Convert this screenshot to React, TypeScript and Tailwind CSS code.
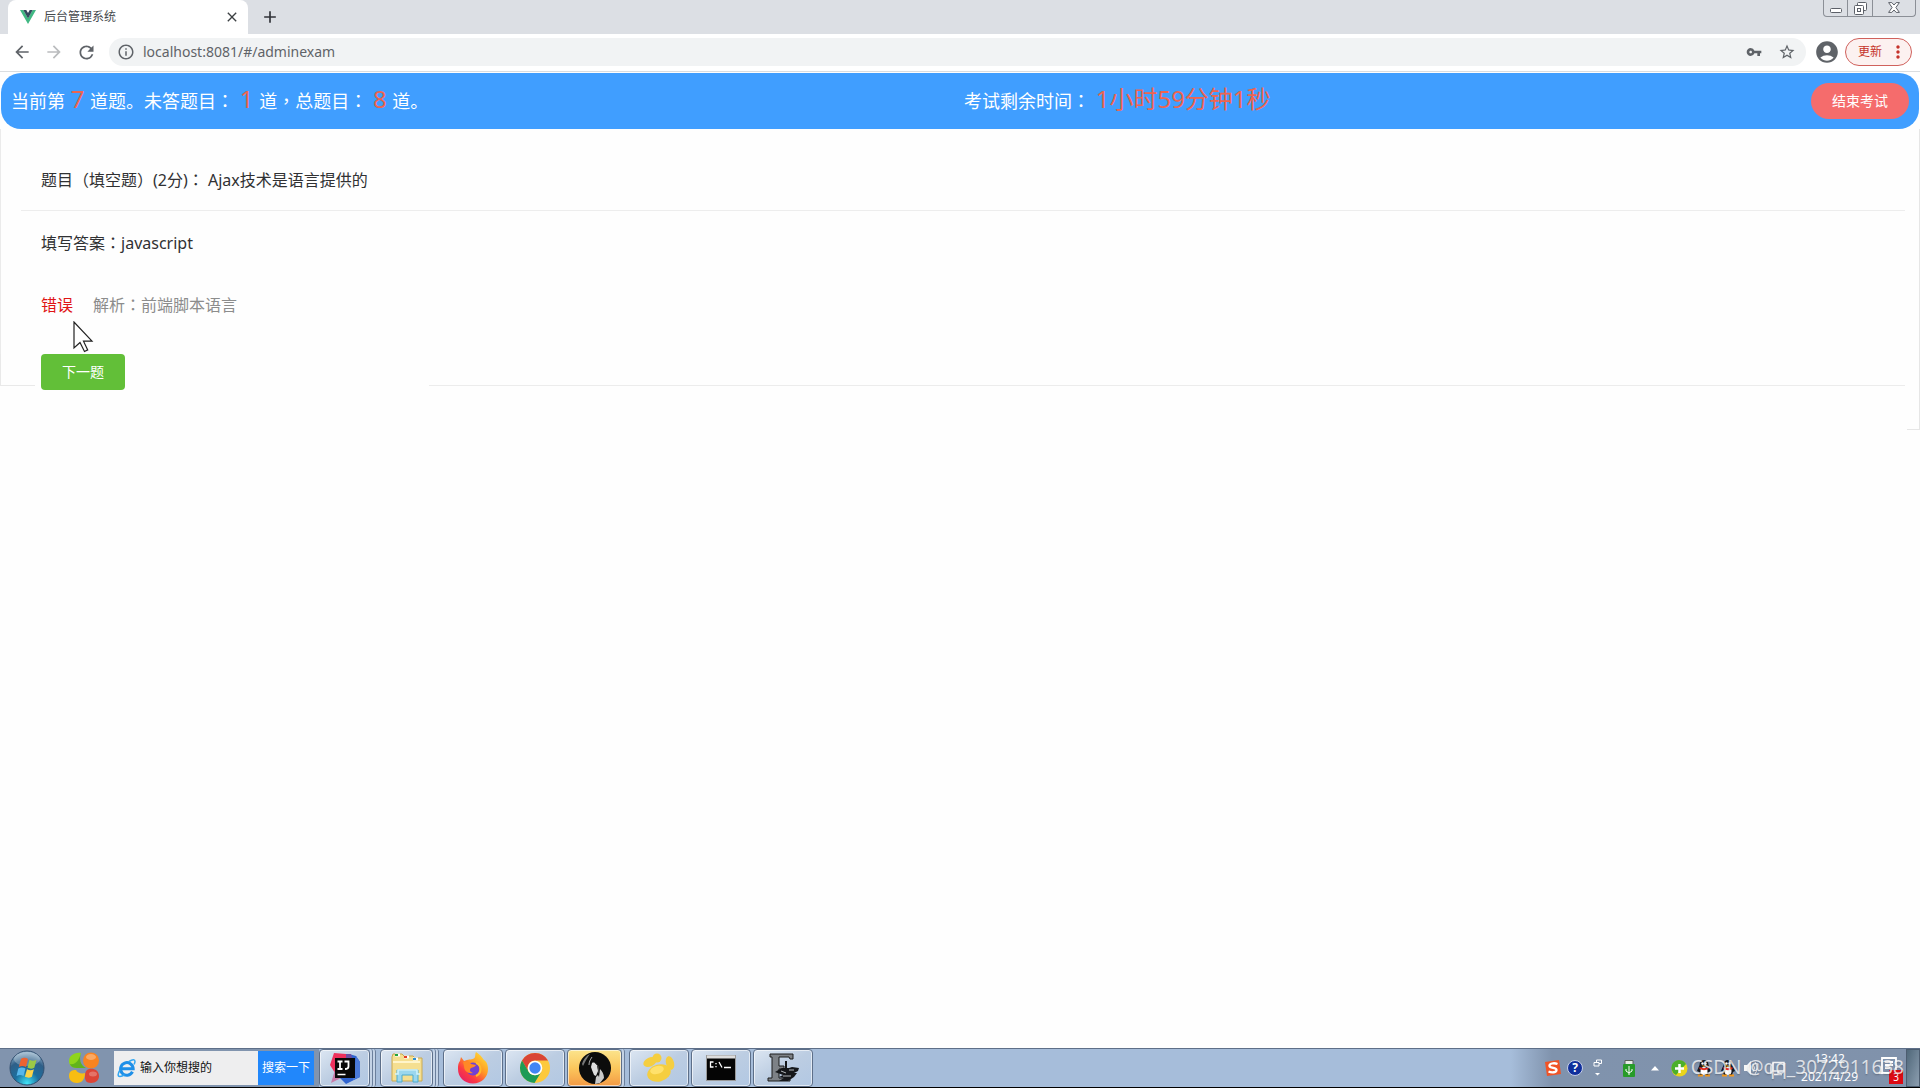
import type { ReactNode } from 'react'
import {
  MdAccountCircle,
  MdAdd,
  MdArrowBack,
  MdArrowForward,
  MdClose,
  MdMoreVert,
  MdOutlineInfo,
  MdRefresh,
  MdStarBorder,
  MdVpnKey,
} from 'react-icons/md'

const exam = {
  current: 7,
  unanswered: 1,
  total: 8,
  timeLeft: '1小时59分钟1秒',
}

function VueLogo() {
  return (
    <svg width="16" height="14" viewBox="0 0 16 14" aria-hidden="true">
      <path d="M0 0h3.3L8 8.2 12.7 0H16L8 14z" fill="#41b883" />
      <path d="M3.3 0h3L8 3l1.700-3h3L8 8.400z" fill="#34495e" />
    </svg>
  )
}

function WindowButtons() {
  return (
    <div className="mr-1 flex h-[17px] rounded-b-sm border border-t-0 border-[#8b8f96] text-[#5c6068]">
      <button aria-label="最小化" className="flex w-6 items-end justify-center border-r border-[#8b8f96] pb-[3px]">
        <svg width="12" height="5" viewBox="0 0 12 5">
          <rect x=".5" y=".5" width="11" height="4" rx="1" fill="#fff" stroke="currentColor" />
        </svg>
      </button>
      <button aria-label="还原" className="flex w-[25px] items-end justify-center border-r border-[#8b8f96] pb-px">
        <svg width="13" height="13" viewBox="0 0 13 13" fill="#fff" stroke="currentColor">
          <rect x="3.500" y=".5" width="9" height="8" rx="1" />
          <rect x=".5" y="3.500" width="9" height="9" rx="1" />
          <rect x="3.500" y="6.500" width="3" height="3" />
        </svg>
      </button>
      <button aria-label="关闭" className="flex w-[42px] items-end justify-center pb-[3px]">
        <svg width="12" height="11" viewBox="0 0 12 11" fill="#fff" stroke="currentColor">
          <path d="M.6.6h3.200L6 3 8.200.6h3.200L7.900 5.500l3.500 4.900H8.200L6 8 3.800 10.400H.6l3.500-4.900z" />
        </svg>
      </button>
    </div>
  )
}

function TabStrip() {
  return (
    <div className="flex h-[34px] items-start justify-between bg-[#dcdfe4]">
      <div className="flex h-full items-center">
        <div className="ml-2 flex h-full w-60 items-center rounded-t-lg bg-white pr-2 pl-3">
          <VueLogo />
          <span className="ml-2 flex-1 text-xs leading-5 text-[#45494d]">后台管理系统</span>
          <button aria-label="关闭标签页" className="text-[#3c4043]">
            <MdClose size={16} />
          </button>
        </div>
        <button aria-label="新标签页" className="ml-3 text-[#303338]">
          <MdAdd size={20} />
        </button>
      </div>
      <WindowButtons />
    </div>
  )
}

function Toolbar() {
  return (
    <div className="flex h-[38px] items-center border-b border-[#dadde0] bg-white pr-2 pb-px pl-3 text-[#5f6368]">
      <button aria-label="后退">
        <MdArrowBack size={20} />
      </button>
      <button aria-label="前进" disabled className="ml-3 text-[#babcbe]">
        <MdArrowForward size={20} />
      </button>
      <button aria-label="刷新" className="ml-3">
        <MdRefresh size={21} />
      </button>
      <div className="ml-3 flex h-7 flex-1 items-center rounded-full bg-[#f1f3f4] pr-[10px] pl-2">
        <MdOutlineInfo size={18} />
        <input
          aria-label="地址"
          defaultValue="localhost:8081/#/adminexam"
          className="ml-2 flex-1 bg-transparent text-sm text-[#5f6368] outline-none"
        />
        <button aria-label="密码">
          <MdVpnKey size={16} />
        </button>
        <button aria-label="收藏" className="ml-4">
          <MdStarBorder size={18} />
        </button>
      </div>
      <button aria-label="用户" className="ml-2">
        <MdAccountCircle size={26} />
      </button>
      <button className="ml-[5px] flex h-7 items-center rounded-full border border-[#d0615c] bg-[#fcf1f0] pr-[3px] pl-3 text-xs text-[#c5332b]">
        更新
        <MdMoreVert size={20} className="ml-[6px]" />
      </button>
    </div>
  )
}

function Num({ children }: { children: ReactNode }) {
  return <span className="px-px text-2xl leading-none text-[#ee6450]">{children}</span>
}

// centred full-width punctuation
function Mark({ children }: { children: ReactNode }) {
  return <span className="font-['Noto_Sans_CJK_TC',sans-serif] leading-none">{children}</span>
}

function ExamHeader() {
  return (
    <header className="mx-px mt-px flex h-14 items-center rounded-[20px] bg-[#409eff] px-[10px] text-lg text-white">
      <p className="flex-1">
        当前第 <Num>{exam.current}</Num> 道题。未答题目<Mark>：</Mark> <Num>{exam.unanswered}</Num> 道<Mark>，</Mark>
        总题目<Mark>：</Mark> <Num>{exam.total}</Num> 道。
      </p>
      <div className="flex flex-1 items-center justify-between pl-2">
        <p>
          考试剩余时间<Mark>：</Mark> <Num>{exam.timeLeft}</Num>
        </p>
        <button className="h-9 rounded-full bg-[#f56c6c] px-[21px] text-sm">结束考试</button>
      </div>
    </header>
  )
}

function MouseCursor() {
  return (
    <svg width="21" height="32" viewBox="0 0 21 32" aria-hidden="true">
      <path
        d="M1 1v26l6-5.500 4.500 9 3.200-1.600-4.200-8.700H19z"
        fill="#fff"
        stroke="#222"
        strokeWidth="1.200"
      />
    </svg>
  )
}

function Question() {
  return (
    <section className="border-r border-[#e6e6e6] text-base leading-6 text-[#303133]">
      <div className="border-l border-[#ebebeb]">
        <p className="px-10 pt-[39px] pb-[18px]">
          题目（填空题）(2分)<Mark>：</Mark> Ajax技术是语言提供的
        </p>
        <hr className="mr-[14px] ml-5 border-[#ededed]" />
        <p className="px-10 pt-5">
          填写答案<Mark>：</Mark>javascript
        </p>
        <div className="relative mx-10 flex gap-5 pt-[38px] pb-[37px]">
          <span className="text-[#e01515]">错误</span>
          <span className="text-[#8c8c8c]">
            解析<Mark>：</Mark>前端脚本语言
          </span>
          <div className="absolute top-[66px] left-8">
            <MouseCursor />
          </div>
        </div>
      </div>
      <div className="flex items-start">
        <div className="mr-[6px] h-8 w-[35px] border-b border-l border-[#e9e9e9]" />
        <button className="h-9 rounded bg-[#62bf38] px-[21px] text-sm text-white">下一题</button>
        <div className="mr-[14px] ml-[304px] h-8 flex-1 border-b border-[#ececec]" />
      </div>
      <div className="ml-auto h-10 w-3 border-b border-[#e6e6e6]" />
    </section>
  )
}

function StartOrb() {
  return (
    <svg width="36" height="36" viewBox="0 0 36 36" aria-hidden="true">
      <defs>
        <radialGradient id="orb" cx=".5" cy=".95" r=".9">
          <stop offset="0" stopColor="#42e5f8" />
          <stop offset=".4" stopColor="#1c6f9f" />
          <stop offset=".75" stopColor="#2f5f88" />
          <stop offset="1" stopColor="#8cacc5" />
        </radialGradient>
      </defs>
      <circle cx="18" cy="18" r="17" fill="url(#orb)" stroke="#314f70" />
      <ellipse cx="18" cy="9" rx="13" ry="7" fill="#fff" opacity=".25" />
      <path d="M12 9c3-1.800 5-1.200 7 0l-2 8c-2.500-1.300-4.500-1.500-7.200 0z" fill="#ec6332" />
      <path d="M20.500 9.800c2.300 1.200 4.700 1.300 7 0l-2.200 8c-2.500 1.200-4.500 1-6.800 0z" fill="#9cc946" />
      <path d="M9.300 18.500c2.700-1.500 4.700-1.300 7.200 0l-2 7.500c-2.500-1.500-4.500-1.500-7 0z" fill="#58b7ec" />
      <path d="M18 19.300c2.300 1.100 4.500 1.200 6.900 0l-2 7.500c-2.300 1.200-4.600 1-7 0z" fill="#fbd44a" />
    </svg>
  )
}

function CloverIcon() {
  return (
    <svg width="32" height="32" viewBox="0 0 32 32" aria-hidden="true">
      <circle cx="23" cy="8.500" r="8" fill="#f98421" />
      <path d="M13 1C6 0 1 4 1 9c0 5 4 7 8 7h6c-3-3-4-9-2-15z" fill="#8fd51b" />
      <path d="M13 1c-2 6-1 12 5 15H9c-3 0-6-1-7-4 6 1 9-4 11-11z" fill="#62b31c" />
      <path d="M1 24c0-5 3-6 7-6 1 3 6 4 9 3 0 6-3 10-8 10s-8-3-8-7z" fill="#f7bd12" />
      <path d="M19 18c4-3 12-1 12 6 0 4-3 7-8 7s-6-3-6-6c0-3 0-5 2-7z" fill="#dc4436" />
      <ellipse cx="23" cy="5" rx="5" ry="3" fill="#fff" opacity=".3" />
      <ellipse cx="25" cy="22" rx="4" ry="2.500" fill="#fff" opacity=".25" />
    </svg>
  )
}

function IeIcon() {
  return (
    <svg width="19" height="19" viewBox="0 0 19 19" fill="none" aria-hidden="true">
      <path d="M15.500 12.800A6.300 6.300 0 1 1 16.200 9.800H4.500" stroke="#1e8fe8" strokeWidth="3" />
      <path
        d="M12 2.500c4-2.500 6-2 6 0 0 1-.5 2-1 3M3 11c-2.500 4-2.500 6.500 0 6.500 1.500 0 3-.7 4.500-1.800"
        stroke="#31a6f2"
        strokeWidth="1.500"
      />
    </svg>
  )
}

function IdeaIcon() {
  return (
    <svg width="32" height="32" viewBox="0 0 32 32" aria-hidden="true">
      <path d="M5 1l12 1 4 8-15 11-5-8z" fill="#ed315d" />
      <path d="M2 31l4-13 10 6z" fill="#c77ba8" />
      <path d="M20 2l7 2 4 6v15L17 32l-6-6z" fill="#2f63cf" />
      <path d="M27 4l4 6v15l-7 3z" fill="#4b7ad8" />
      <path d="M17 2l5 0 3 9-8 6z" fill="#6c4fa3" />
      <rect x="6" y="6" width="20" height="20" fill="#080808" />
      <path
        d="M8.500 9.500h5M11 9.500v7.500M8.500 17h5M15.500 9.500h4v5c0 1.800-1 2.500-3.500 2.500"
        stroke="#fff"
        strokeWidth="1.800"
        fill="none"
      />
      <path d="M8.500 22.500h8" stroke="#fff" strokeWidth="1.500" />
    </svg>
  )
}

function FolderIcon() {
  return (
    <svg width="32" height="32" viewBox="0 0 32 32" aria-hidden="true">
      <path d="M2 2h9l2 2h9l2 2h7v23H1V5z" fill="#f5df91" stroke="#c9a951" />
      <path d="M4 3h5M13 5h5M22 7h5" stroke="#fff" strokeWidth="3" />
      <path d="M4 3h3" stroke="#22a33f" strokeWidth="2" />
      <path d="M13 5h3" stroke="#e23c26" strokeWidth="2" />
      <path d="M22 7h3" stroke="#2b8ed2" strokeWidth="2" />
      <path d="M2 10h27" stroke="#fff5ca" strokeWidth="2" />
      <path d="M6 18h21v12h-5v-7H11v7H6z" fill="#9bd7ee" stroke="#4babcf" />
      <path d="M4 22h3v-4h19v4h3" fill="none" stroke="#d4f3fb" strokeWidth="1.500" />
    </svg>
  )
}

function FirefoxIcon() {
  return (
    <svg width="32" height="32" viewBox="0 0 32 32" aria-hidden="true">
      <defs>
        <linearGradient id="fox" x1="1" y1="0" x2=".2" y2="1">
          <stop offset="0" stopColor="#fff03f" />
          <stop offset=".45" stopColor="#ff9b25" />
          <stop offset=".75" stopColor="#fb3b43" />
          <stop offset="1" stopColor="#e51d68" />
        </linearGradient>
      </defs>
      <path
        d="M19 0c5 3 7 7 8 8 2 1 4 4 4 9 0 8-6 14.500-15 14.500S1 25 1 17c0-5 1-7 2-8l1-4 3 4 3-1c3-1 7 0 8-3 .5-2 0-3 1-5z"
        fill="url(#fox)"
      />
      <circle cx="16" cy="17" r="6.500" fill="#7040d5" />
      <path d="M6 10c4-1 7 0 8 2l5 1c-1 2-3 2-5 3-2 2-1 4 2 5-5 1-9-2-9-7z" fill="#ff8926" />
      <path d="M19 11c6 2 6 10 0 13" fill="none" stroke="#ffba2d" strokeWidth="2" />
    </svg>
  )
}

function ChromeIcon() {
  return (
    <svg width="32" height="32" viewBox="0 0 32 32" aria-hidden="true">
      <circle cx="16" cy="16" r="15" fill="#fdc93b" />
      <path d="M3 8.500A15 15 0 0 1 29 8.500H16a7.500 7.500 0 0 0-6.500 11.200z" fill="#d94536" />
      <path d="M3 8.500a15 15 0 0 0 12.500 22.500l7-11.500a7.500 7.500 0 0 1-13 0z" fill="#1d9b56" />
      <circle cx="16" cy="16" r="7.300" fill="#fff" />
      <circle cx="16" cy="16" r="5.700" fill="#4285f4" />
    </svg>
  )
}

function AvatarIcon() {
  return (
    <svg width="32" height="32" viewBox="0 0 32 32" aria-hidden="true">
      <circle cx="16" cy="16" r="16" fill="#0c0c0c" />
      <path d="M11 2c-4 2-7 6-8 10l1 2c2-4 4-8 7-12z" fill="#777" />
      <path d="M13 5c-2 3-3 5-3 8" fill="none" stroke="#aaa" />
      <path d="M13 11c2-1 4 0 5 2l1 6-2 5-2-1-2-5-1-3z" fill="#dedede" />
      <path d="M21 17c2 2 4 5 4 9l-4 5-5 1 1-7 2-2 1 2z" fill="#c9c9c9" />
      <path d="M16 11l3 3 1 7" fill="none" stroke="#444" />
    </svg>
  )
}

function PawIcon() {
  return (
    <svg width="32" height="30" viewBox="0 0 32 30" aria-hidden="true">
      <g fill="#f5ce40">
        <ellipse cx="7" cy="9" rx="7" ry="4.500" transform="rotate(-25 7 9)" />
        <ellipse cx="14" cy="5" rx="4.500" ry="4.500" />
        <ellipse cx="27" cy="10" rx="4" ry="7" transform="rotate(-15 27 10)" />
        <ellipse cx="16" cy="20" rx="12" ry="8.500" transform="rotate(-15 16 20)" />
      </g>
      <ellipse cx="14" cy="17" rx="7" ry="4" fill="#ffe16b" transform="rotate(-15 14 17)" />
    </svg>
  )
}

function ConsoleIcon() {
  return (
    <svg width="30" height="26" viewBox="0 0 30 26" aria-hidden="true">
      <rect x=".5" y=".5" width="29" height="25" fill="#050505" stroke="#999" />
      <path d="M1 2h28" stroke="#ddd" strokeWidth="3" />
      <path d="M7.500 7H4.500v5h3M10 8v1.200M10 11v1.200M13 7l3 5.500" stroke="#fff" fill="none" strokeWidth="1.300" />
      <path d="M18 12.500h7" stroke="#fff" strokeWidth="1.500" />
    </svg>
  )
}

function ToolIcon() {
  return (
    <svg width="32" height="30" viewBox="0 0 32 30" aria-hidden="true">
      <path d="M3 1h23v5h-3l-1-2H12v9h5v3h-5v9h11v3H1v-3h4V4H3z" fill="#7d8186" stroke="#1c1c1c" />
      <path d="M8 19l7-4h7l3-1 7 1-1 3-4 2h3l-3 4-6 4H12l5-3-5-1 4-2z" fill="#15171a" />
      <path d="M19 8v8" stroke="#15171a" strokeWidth="2" />
      <path d="M14 18l5 2M16 23h8M22 17h5" stroke="#b1b5b8" />
    </svg>
  )
}

interface TaskButtonProps {
  label: string
  className: string
  active?: boolean
  children: ReactNode
}

function TaskButton({ label, className, active, children }: TaskButtonProps) {
  const color = active
    ? 'bg-linear-to-b from-[#fbe48c] via-[#fbc75c] to-[#f39a45]'
    : 'bg-linear-to-br from-[#dce6f2] via-[#bccde2] to-[#b2c8e3]'
  return (
    <button
      aria-label={label}
      className={`flex h-full items-center justify-center rounded-sm border border-[#5d6f89] inset-ring inset-ring-white/60 ${color} ${className}`}
    >
      {children}
    </button>
  )
}

function StackEdge() {
  return <div className="h-full w-[3px] rounded-r-sm border-r border-[#6b7f9c] bg-[#c4d3e6]" />
}

function Penguin() {
  return (
    <svg width="16" height="17" viewBox="0 0 16 17" aria-hidden="true">
      <path d="M8 0c3 0 4.500 2 4.500 5l2.500 6-2 1-1 3H4l-1-3-2-1 2.500-6C3.500 2 5 0 8 0z" fill="#15181c" />
      <ellipse cx="8" cy="11" rx="3.500" ry="4" fill="#fff" />
      <path d="M3.500 7c3 1.500 6 1.500 9 0v2c-3 1.500-6 1.500-9 0z" fill="#e42b20" />
      <path d="M5.500 5.500h5L8 7z" fill="#fbb316" />
      <circle cx="6.500" cy="3.500" r="1.200" fill="#fff" />
      <circle cx="9.500" cy="3.500" r="1.200" fill="#fff" />
      <path d="M2 15.500h5M9 15.500h5" stroke="#f79a1a" strokeWidth="2" />
    </svg>
  )
}

function Tray() {
  return (
    <div className="relative flex h-full items-center bg-linear-to-r from-[#a6bdda] via-[#8093ad] via-10% to-[#8092ab] pl-[34px] text-white">
      <div className="flex items-center gap-[6px]">
        <svg width="16" height="16" viewBox="0 0 16 16" aria-hidden="true">
          <path d="M0 2L14 0l2 14-14 2z" fill="#f05326" />
          <path
            d="M12.500 4C9 2.500 4 3.500 4.500 6s7 1.500 7 4-4.500 3-8 1.500"
            fill="none"
            stroke="#fff"
            strokeWidth="2.300"
          />
        </svg>
        <span className="flex size-4 items-center justify-center rounded-full border border-[#c8d0e8] bg-[#102f9c] text-xs leading-none font-bold">
          ?
        </span>
        <svg className="ml-1" width="10" height="18" viewBox="0 0 10 18" aria-hidden="true">
          <path d="M3.500 3.500V1h5v3.500H6M1 3.500h5V7H1z" fill="none" stroke="#fff" />
          <path d="M2 14h5l-2.500 2.500z" fill="#fff" />
        </svg>
      </div>
      <svg className="ml-5" width="12" height="17" viewBox="0 0 12 17" aria-hidden="true">
        <path d="M2 .5h8V5H2z" fill="#e8ebe8" stroke="#59635b" />
        <rect y="4" width="12" height="13" rx="1" fill="#279b29" />
        <path d="M6 6v9M3 9v2l3 2 3-2V9" stroke="#fff" fill="none" />
      </svg>
      <svg className="ml-4" width="8" height="5" viewBox="0 0 8 5" aria-hidden="true">
        <path d="M0 4.500h8L4 0z" fill="#fff" />
      </svg>
      <div className="ml-3 flex items-center gap-2">
        <svg width="17" height="17" viewBox="0 0 17 17" aria-hidden="true">
          <circle cx="8.500" cy="8.500" r="8" fill="#e9d51c" />
          <path d="M2 3a8 8 0 0 1 13 1L5 15A8 8 0 0 1 2 3z" fill="#4caf2a" />
          <path d="M8.500 4v9M4 8.500h9" stroke="#fff" strokeWidth="2.500" />
        </svg>
        <Penguin />
        <Penguin />
        <svg width="14" height="16" viewBox="0 0 14 16" aria-hidden="true">
          <path d="M0 5h3l4-4v14l-4-4H0z" fill="#f5f5f5" />
          <path d="M9 4q3 4 0 8M11 2q4 6 0 12" stroke="#e8e8e8" fill="none" />
        </svg>
        <svg className="ml-1" width="15" height="15" viewBox="0 0 15 15" fill="none" aria-hidden="true">
          <path d="M3 1.500h11V10H3zM8 10v3M4 13.500h8M1 4v9" stroke="#f3f3f3" strokeWidth="1.500" />
        </svg>
      </div>
      <div className="ml-4 text-center text-xs leading-[18px]">
        <div>13:42</div>
        <div>2021/4/29</div>
      </div>
      <div className="relative mr-[3px] ml-5 h-6 w-[25px]">
        <svg width="20" height="20" viewBox="0 0 20 20" fill="none" aria-hidden="true">
          <path d="M4 2h14v15H4zM1 17h15M7 6h8M7 9h8M7 12h5" stroke="#fff" strokeWidth="1.800" />
        </svg>
        <span className="absolute right-0 -bottom-1 flex h-[14px] w-[14px] items-center justify-center bg-[#dc0a14] text-[10px] leading-none">
          3
        </span>
      </div>
      <button
        aria-label="显示桌面"
        className="h-full w-[14px] border border-[#4c5d70] bg-linear-to-br from-[#50687a] to-[#8c9eb0]"
      />
      <span className="absolute right-4 bottom-2 text-[19px] leading-6 text-white/75 text-shadow-sm">
        CSDN @qq_3072911638
      </span>
    </div>
  )
}

function Taskbar() {
  return (
    <footer className="flex h-10 items-center border-t border-b border-t-[#5e6f88] border-b-black bg-[#a6bdda]">
      <div className="flex h-full items-center bg-[#8194ae] pr-[5px] pl-[9px]">
        <button aria-label="开始">
          <StartOrb />
        </button>
        <button aria-label="桌面助手" className="ml-[23px]">
          <CloverIcon />
        </button>
        <form className="ml-[14px] flex h-[34px] items-center bg-[#eeeeef] pl-[3px] text-xs">
          <IeIcon />
          <input
            aria-label="搜索"
            placeholder="输入你想搜的"
            className="ml-1 w-[118px] bg-transparent placeholder:text-[#111] outline-none"
          />
          <button type="button" className="h-full bg-[#2187fb] px-1 text-white">
            搜索一下
          </button>
        </form>
      </div>
      <TaskButton label="IntelliJ IDEA" className="w-[51px]">
        <IdeaIcon />
      </TaskButton>
      <StackEdge />
      <StackEdge />
      <TaskButton label="资源管理器" className="ml-1 w-[53px]">
        <FolderIcon />
      </TaskButton>
      <StackEdge />
      <StackEdge />
      <div className="ml-1 flex h-full gap-[2px]">
        <TaskButton label="Firefox" className="w-[60px]">
          <FirefoxIcon />
        </TaskButton>
        <TaskButton label="Chrome" className="w-[60px]">
          <ChromeIcon />
        </TaskButton>
        <div className="flex h-full">
          <TaskButton label="QQ" className="w-[55px]" active>
            <AvatarIcon />
          </TaskButton>
          <StackEdge />
        </div>
        <TaskButton label="百度网盘" className="ml-[2px] w-[60px]">
          <PawIcon />
        </TaskButton>
        <TaskButton label="命令提示符" className="w-[60px]">
          <ConsoleIcon />
        </TaskButton>
        <TaskButton label="录屏工具" className="w-[60px]">
          <ToolIcon />
        </TaskButton>
      </div>
      <div className="ml-auto h-full">
        <Tray />
      </div>
    </footer>
  )
}

export default function App() {
  return (
    <div className="flex min-h-screen flex-col bg-[#fefefe] font-['Noto_Sans','Noto_Sans_CJK_SC',sans-serif]">
      <TabStrip />
      <Toolbar />
      <main className="flex-1">
        <ExamHeader />
        <Question />
      </main>
      <Taskbar />
    </div>
  )
}
